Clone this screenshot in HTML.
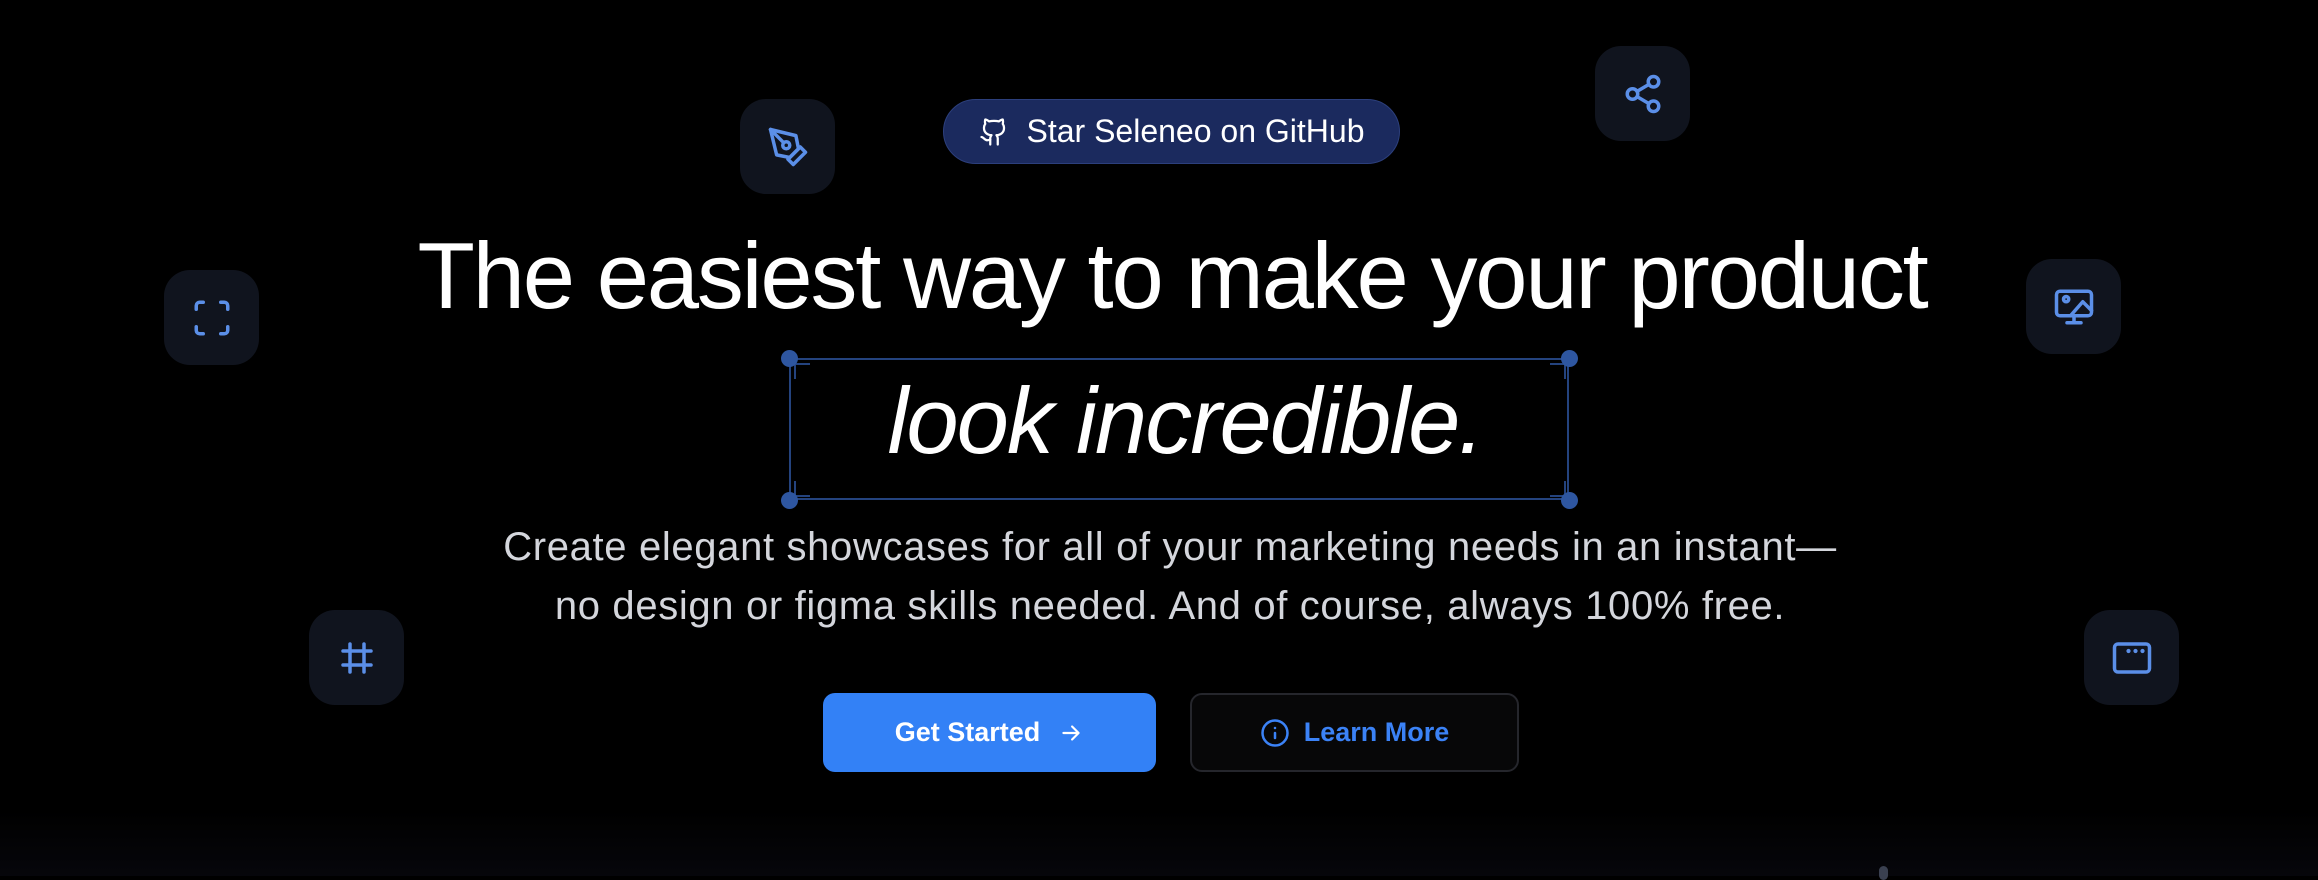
<!DOCTYPE html>
<html><head><meta charset="utf-8"><style>
html,body{margin:0;padding:0;background:#000;width:2318px;height:876px;overflow:hidden;font-family:"Liberation Sans",sans-serif}
body{background:linear-gradient(#000 0,#000 810px,#06060b 876px)}
.ib{position:absolute;width:95px;height:95px;border-radius:26px;background:#10141e;display:flex;align-items:center;justify-content:center}
.ib svg{width:42px;height:42px;fill:none;stroke:#5b8fe8;stroke-width:2;stroke-linecap:round;stroke-linejoin:round}
.abs{position:absolute}
h1{position:absolute;left:0;width:2318px;text-align:center;margin:0;color:#fff;font-weight:400;font-size:94px;letter-spacing:-2.2px;line-height:1}
.dot{position:absolute;width:17px;height:17px;border-radius:50%;background:#2e56a0}
</style></head><body>
<div class="abs" style="left:943px;top:99px;width:455px;height:63px;border-radius:33px;background:#1b2a5e;border:1px solid #2c3f7c;display:flex;align-items:center;justify-content:center;color:#fff;font-size:32px;gap:18px">
<svg width="30" height="30" viewBox="0 0 24 24" fill="none" stroke="#fff" stroke-width="1.8" stroke-linecap="round" stroke-linejoin="round"><path d="M15 22v-4a4.8 4.8 0 0 0-1-3.5c3 0 6-2 6-5.5.08-1.25-.27-2.48-1-3.5.28-1.15.28-2.35 0-3.5 0 0-1 0-3 1.5-2.64-.5-5.36-.5-8 0C6 2 5 2 5 2c-.3 1.15-.3 2.35 0 3.5A5.4 5.4 0 0 0 4 9c0 3.5 3 5.5 6 5.5-.39.49-.68 1.05-.85 1.65-.17.6-.22 1.23-.15 1.85v4"/><path d="M9 18c-4.51 2-5-2-7-2"/></svg>
<span>Star Seleneo on GitHub</span></div>

<div class="ib" style="left:740px;top:99px"><svg viewBox="0 0 24 24"><path d="M12 19l7-7 3 3-7 7-3-3z"/><path d="M18 13l-1.5-7.5L2 2l3.5 14.5L13 18l5-5z"/><path d="M2 2l7.6 7.6"/><circle cx="11" cy="11" r="2"/></svg></div>
<div class="ib" style="left:1595px;top:46px"><svg viewBox="0 0 24 24"><circle cx="18" cy="5" r="3"/><circle cx="6" cy="12" r="3"/><circle cx="18" cy="19" r="3"/><path d="M8.6 13.5l6.8 4M15.4 6.5l-6.8 4"/></svg></div>
<div class="ib" style="left:164px;top:270px"><svg viewBox="0 0 24 24"><path d="M3 7V5a2 2 0 0 1 2-2h2M17 3h2a2 2 0 0 1 2 2v2M21 17v2a2 2 0 0 1-2 2h-2M7 21H5a2 2 0 0 1-2-2v-2"/></svg></div>
<div class="ib" style="left:2026px;top:259px"><svg viewBox="0 0 24 24"><rect x="2" y="3" width="20" height="14" rx="2"/><path d="M12 17v4M8 21h8"/><circle cx="7.5" cy="7.5" r="1.5"/><path d="M22 14l-5-5-7 8"/></svg></div>
<div class="ib" style="left:309px;top:610px"><svg viewBox="0 0 24 24"><path d="M4 8h16M4 16h16M8 4v16M16 4v16"/></svg></div>
<div class="ib" style="left:2084px;top:610px"><svg viewBox="0 0 24 24"><rect x="2" y="4" width="20" height="16" rx="2"/><path d="M10 8h.01M14 8h.01M18 8h.01" stroke-width="2.4"/></svg></div>

<h1 style="top:229px;left:13px">The easiest way to make your product</h1>
<div class="abs" style="left:789px;top:358px;width:780px;height:142px;border:2px solid #24437e;box-sizing:border-box"></div>
<div class="abs" style="left:794px;top:363px;width:14px;height:14px;border-left:2px solid #24437e;border-top:2px solid #24437e"></div>
<div class="abs" style="left:1550px;top:363px;width:14px;height:14px;border-right:2px solid #24437e;border-top:2px solid #24437e"></div>
<div class="abs" style="left:794px;top:481px;width:14px;height:14px;border-left:2px solid #24437e;border-bottom:2px solid #24437e"></div>
<div class="abs" style="left:1550px;top:481px;width:14px;height:14px;border-right:2px solid #24437e;border-bottom:2px solid #24437e"></div>
<div class="dot" style="left:781px;top:350px"></div><div class="dot" style="left:1561px;top:350px"></div>
<div class="dot" style="left:781px;top:492px"></div><div class="dot" style="left:1561px;top:492px"></div>
<h1 style="top:374px;font-style:italic;left:26px;letter-spacing:-2px">look incredible.</h1>

<div class="abs" style="left:11px;top:518px;width:2318px;text-align:center;color:#d4d6dc;font-size:40px;line-height:59px;letter-spacing:0.65px">Create elegant showcases for all of your marketing needs in an instant—<br>no design or figma skills needed. And of course, always 100% free.</div>

<div class="abs" style="left:823px;top:693px;width:333px;height:79px;border-radius:12px;background:#3381f6;color:#fff;font-weight:700;font-size:27px;display:flex;align-items:center;justify-content:center;gap:18px">Get Started <svg width="26" height="26" viewBox="0 0 24 24" fill="none" stroke="#fff" stroke-width="2" stroke-linecap="round" stroke-linejoin="round"><path d="M5 12h14M13 6l6 6-6 6"/></svg></div>
<div class="abs" style="left:1190px;top:693px;width:329px;height:79px;box-sizing:border-box;border-radius:12px;background:#070708;border:2px solid #25262c;color:#3b82f6;font-weight:700;font-size:27px;display:flex;align-items:center;justify-content:center;gap:14px"><svg width="30" height="30" viewBox="0 0 24 24" fill="none" stroke="#3b82f6" stroke-width="2" stroke-linecap="round"><circle cx="12" cy="12" r="10"/><path d="M12 16v-4M12 8h.01"/></svg>Learn More</div>
<div class="abs" style="left:1879px;top:866px;width:9px;height:14px;border-radius:5px;background:#3a4050"></div>
</body></html>
